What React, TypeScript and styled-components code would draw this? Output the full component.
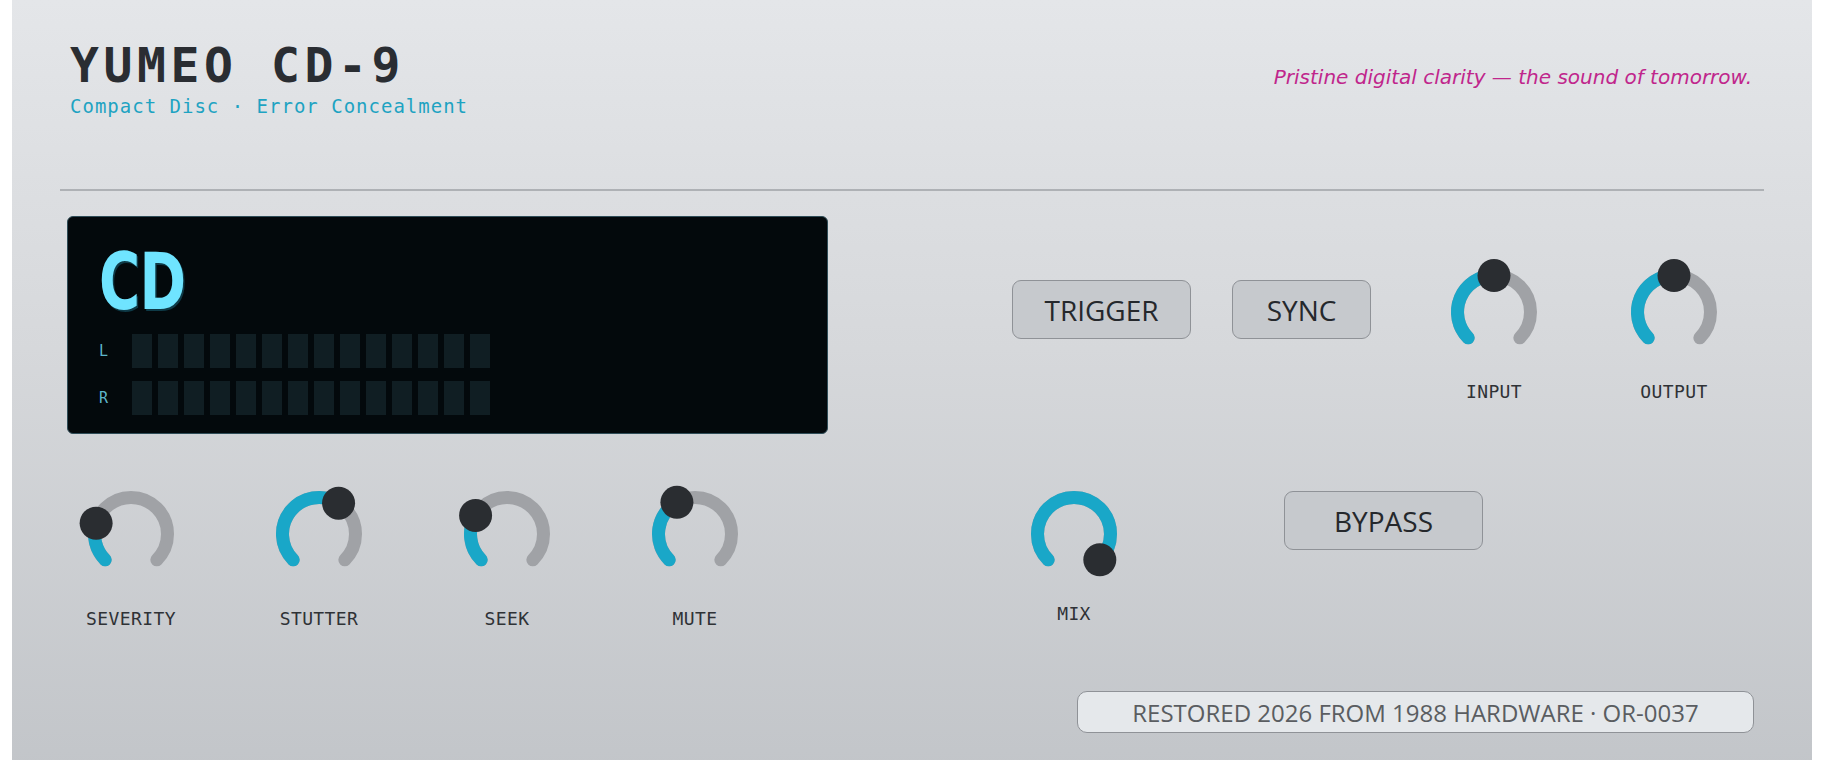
import styled, { createGlobalStyle } from 'styled-components';

// ===== GLOBAL =====
const GlobalStyle = createGlobalStyle`
  html, body {
    margin: 0;
    padding: 0;
    background: #ffffff;
  }
  * {
    box-sizing: border-box;
  }
`;

const MONO = `'DejaVu Sans Mono', 'Liberation Mono', monospace`;
const SANS = `'Open Sans', 'Noto Sans', 'DejaVu Sans', sans-serif`;

// ===== PANEL =====
const Panel = styled.div`
  max-width: 1800px;
  min-height: 760px;
  margin: 0 auto;
  padding: 41px 48px 40px;
  background: linear-gradient(180deg, #e4e6e9 0%, #d6d8db 45%, #c2c5c9 100%);
  display: flex;
  flex-direction: column;
`;

const Header = styled.header`
  display: flex;
  justify-content: space-between;
  align-items: flex-start;
  padding: 0 12px 0 10px;
`;

const Brand = styled.div`
  display: flex;
  flex-direction: column;
`;

const Title = styled.h1`
  margin: 0;
  font-family: ${MONO};
  font-weight: bold;
  font-size: 48px;
  line-height: 1;
  letter-spacing: 4.6px;
  color: #2a2d32;
`;

const Subtitle = styled.div`
  margin-top: 8px;
  font-family: ${MONO};
  font-size: 19px;
  line-height: 1;
  letter-spacing: 1px;
  color: #1ea3c2;
`;

const Tagline = styled.div`
  margin-top: 26px;
  font-family: 'DejaVu Sans', 'Open Sans', sans-serif;
  font-style: italic;
  font-size: 20px;
  line-height: 1;
  color: #c0268c;
`;

const Divider = styled.hr`
  margin: 73px 0 0;
  border: none;
  height: 2px;
  background: #aeb1b5;
`;

// ===== BODY GRID =====
const Body = styled.div`
  display: grid;
  grid-template-columns: 761px 1fr;
  row-gap: 45px;
  margin-top: 25px;
  padding-left: 7px;
`;

const RightCell = styled.div<{ $top: number; $left: number }>`
  display: flex;
  align-items: flex-start;
  padding-top: ${(p) => p.$top}px;
  padding-left: ${(p) => p.$left}px;
`;

const Group = styled.div<{ $gap: number; $top?: number; $left?: number }>`
  display: flex;
  align-items: flex-start;
  gap: ${(p) => p.$gap}px;
  margin-top: ${(p) => p.$top ?? 0}px;
  margin-left: ${(p) => p.$left ?? 0}px;
`;

// ===== DISPLAY =====
const Screen = styled.div`
  height: 218px;
  background: #03090c;
  border: 1px solid #2f4d58;
  border-radius: 6px;
  padding: 26px 30px 0 31px;
  display: flex;
  flex-direction: column;
`;

const ScreenWord = styled.div`
  font-family: 'DejaVu Sans Condensed', 'DejaVu Sans', sans-serif;
  font-stretch: condensed;
  font-weight: bold;
  font-size: 78px;
  line-height: 1;
  color: #6fe4ff;
  text-shadow: 2px 2px 0 #0e3a47;
  transform: scaleX(0.8);
  transform-origin: left center;
  letter-spacing: -1px;
`;

const Meter = styled.div`
  display: flex;
  flex-direction: column;
  gap: 13px;
  margin-top: 13px;
`;

const MeterRow = styled.div`
  display: flex;
  align-items: center;
`;

const Channel = styled.span`
  width: 33px;
  font-family: ${MONO};
  font-size: 15px;
  color: #5db6ca;
`;

const Segments = styled.div`
  display: flex;
  gap: 6px;
`;

const Segment = styled.div`
  width: 20px;
  height: 34px;
  background: #101e23;
`;

// ===== KNOBS =====
const KnobCell = styled.div`
  width: 110px;
  display: flex;
  flex-direction: column;
  align-items: center;
`;

const KnobLabel = styled.div<{ $drop: number }>`
  margin-top: ${(p) => p.$drop}px;
  height: 20px;
  line-height: 20px;
  font-family: ${MONO};
  font-size: 18px;
  letter-spacing: 0.4px;
  color: #2f3236;
  white-space: nowrap;
`;

const KnobRow = styled.div`
  display: flex;
  gap: 78px;
  padding-left: 9px;
`;

const ARC_R = 36.5;
const C = 55;

function polar(deg: number) {
  const a = (deg * Math.PI) / 180;
  return { x: C + ARC_R * Math.sin(a), y: C - ARC_R * Math.cos(a) };
}

function arc(from: number, to: number) {
  const s = polar(from);
  const e = polar(to);
  const large = to - from > 180 ? 1 : 0;
  return `M ${s.x} ${s.y} A ${ARC_R} ${ARC_R} 0 ${large} 1 ${e.x} ${e.y}`;
}

function Knob({ label, value, drop = 15 }: { label: string; value: number; drop?: number }) {
  const angle = -135 + 270 * value;
  const dot = polar(angle);
  return (
    <KnobCell>
      <svg width="110" height="110" viewBox="0 0 110 110" style={{ overflow: 'visible' }}>
        <path d={arc(-135, 135)} fill="none" stroke="#a0a2a6" strokeWidth="13" strokeLinecap="round" />
        {value > 0.001 && (
          <path d={arc(-135, angle)} fill="none" stroke="#19a7c8" strokeWidth="13" strokeLinecap="round" />
        )}
        <circle cx={dot.x} cy={dot.y} r="16.5" fill="#2a2d31" />
      </svg>
      <KnobLabel $drop={drop}>{label}</KnobLabel>
    </KnobCell>
  );
}

// ===== BUTTONS =====
const Button = styled.button<{ $w: number }>`
  width: ${(p) => p.$w}px;
  height: 59px;
  padding: 0;
  background: #c6c9cd;
  border: 1.5px solid #8f9297;
  border-radius: 9px;
  font-family: ${SANS};
  font-size: 28px;
  color: #25282c;
  cursor: pointer;
`;

// ===== FOOTER =====
const Footer = styled.div`
  display: flex;
  justify-content: flex-end;
  padding-right: 10px;
  margin-top: 62px;
`;

const Badge = styled.div`
  width: 677px;
  height: 42px;
  display: flex;
  align-items: center;
  justify-content: center;
  background: #e5e8eb;
  border: 1.5px solid #8f9297;
  border-radius: 10px;
  font-family: ${SANS};
  font-size: 24px;
  color: #5a5d61;
`;

const SEGMENTS = Array.from({ length: 14 });

export default function App() {
  return (
    <>
      <GlobalStyle />
      <Panel>
        <Header>
          <Brand>
            <Title>YUMEO CD-9</Title>
            <Subtitle>Compact Disc · Error Concealment</Subtitle>
          </Brand>
          <Tagline>Pristine digital clarity — the sound of tomorrow.</Tagline>
        </Header>
        <Divider />

        <Body>
          <Screen>
            <ScreenWord>CD</ScreenWord>
            <Meter>
              {['L', 'R'].map((ch) => (
                <MeterRow key={ch}>
                  <Channel>{ch}</Channel>
                  <Segments>
                    {SEGMENTS.map((_, i) => (
                      <Segment key={i} />
                    ))}
                  </Segments>
                </MeterRow>
              ))}
            </Meter>
          </Screen>

          <RightCell $top={41} $left={184}>
            <Group $gap={41} $top={23}>
              <Button $w={179}>TRIGGER</Button>
              <Button $w={139}>SYNC</Button>
            </Group>
            <Group $gap={70} $left={68}>
              <Knob label="INPUT" value={0.5} />
              <Knob label="OUTPUT" value={0.5} />
            </Group>
          </RightCell>

          <KnobRow>
            <Knob label="SEVERITY" value={0.23} drop={20} />
            <Knob label="STUTTER" value={0.62} drop={20} />
            <Knob label="SEEK" value={0.28} drop={20} />
            <Knob label="MUTE" value={0.39} drop={20} />
          </KnobRow>

          <RightCell $top={0} $left={191}>
            <Group $gap={155}>
              <Knob label="MIX" value={1} />
              <Button $w={199} style={{ marginTop: 12 }}>BYPASS</Button>
            </Group>
          </RightCell>
        </Body>

        <Footer>
          <Badge>RESTORED 2026 FROM 1988 HARDWARE · OR-0037</Badge>
        </Footer>
      </Panel>
    </>
  );
}
